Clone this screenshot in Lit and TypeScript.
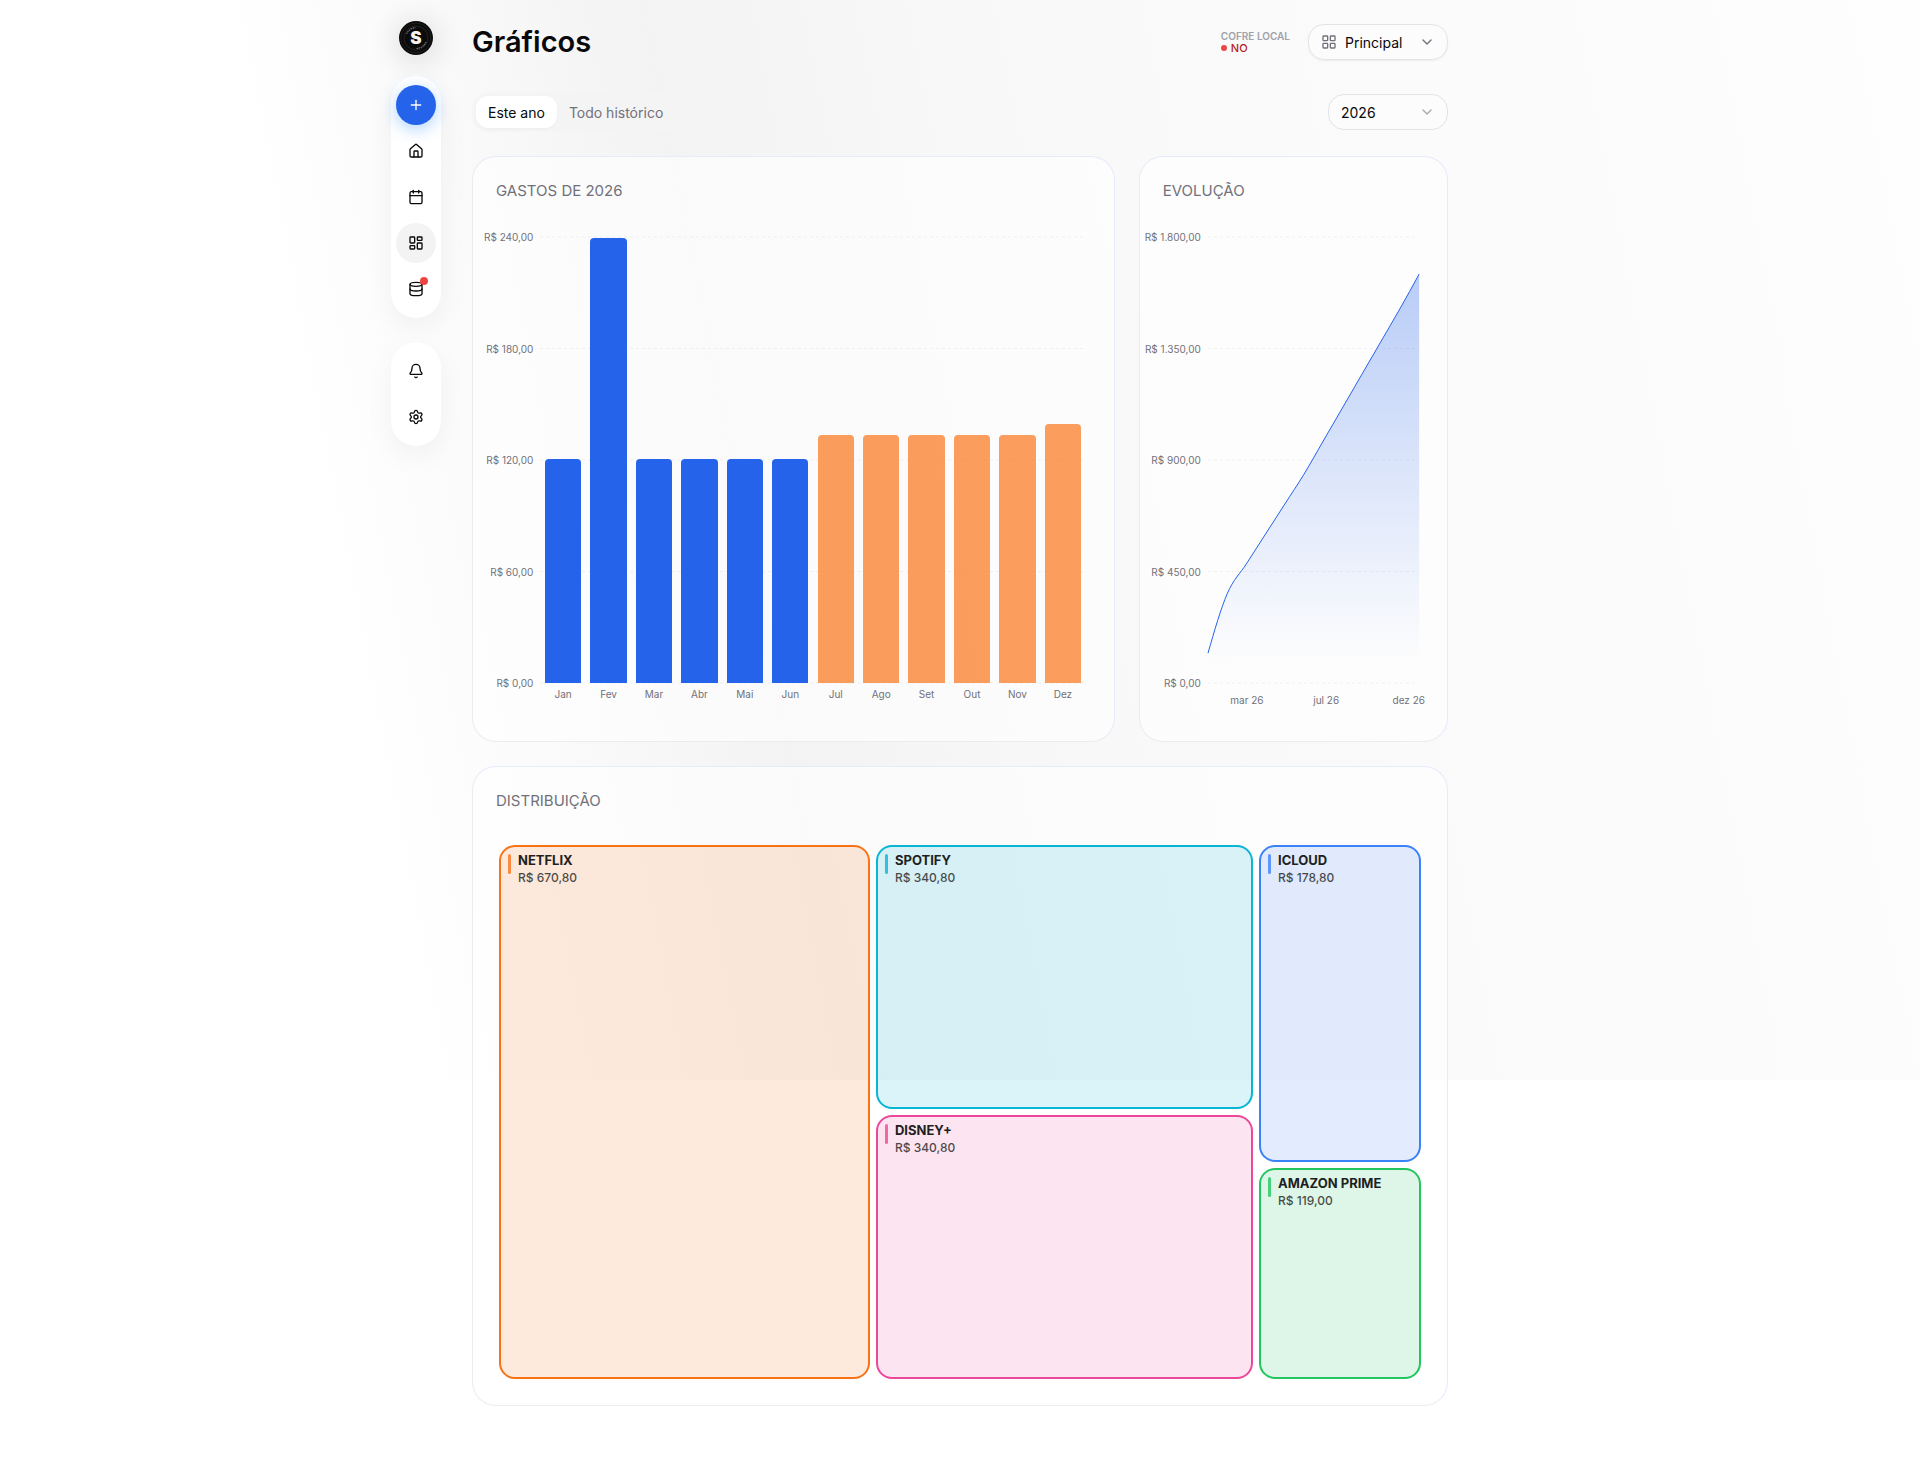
import { LitElement, html, css, svg } from "lit";
import { customElement, property, state } from "lit/decorators.js";
import { classMap } from "lit/directives/class-map.js";
import { styleMap } from "lit/directives/style-map.js";

const icons = {
  plus: svg`<path d="M5 12h14"/><path d="M12 5v14"/>`,
  home: svg`<path d="M15 21v-8a1 1 0 0 0-1-1h-4a1 1 0 0 0-1 1v8"/><path d="M3 10a2 2 0 0 1 .709-1.528l7-5.999a2 2 0 0 1 2.582 0l7 5.999A2 2 0 0 1 21 10v9a2 2 0 0 1-2 2H5a2 2 0 0 1-2-2z"/>`,
  calendar: svg`<path d="M8 2v4"/><path d="M16 2v4"/><rect width="18" height="18" x="3" y="4" rx="2"/><path d="M3 10h18"/>`,
  dashboard: svg`<rect width="7" height="9" x="3" y="3" rx="1"/><rect width="7" height="5" x="14" y="3" rx="1"/><rect width="7" height="9" x="14" y="12" rx="1"/><rect width="7" height="5" x="3" y="16" rx="1"/>`,
  database: svg`<ellipse cx="12" cy="5" rx="9" ry="3"/><path d="M3 5V19A9 3 0 0 0 21 19V5"/><path d="M3 12A9 3 0 0 0 21 12"/>`,
  bell: svg`<path d="M10.268 21a2 2 0 0 0 3.464 0"/><path d="M3.262 15.326A1 1 0 0 0 4 17h16a1 1 0 0 0 .74-1.673C19.41 13.956 18 12.499 18 8A6 6 0 0 0 6 8c0 4.499-1.411 5.956-2.738 7.326"/>`,
  settings: svg`<path d="M9.671 4.136a2.34 2.34 0 0 1 4.659 0 2.34 2.34 0 0 0 3.319 1.915 2.34 2.34 0 0 1 2.33 4.033 2.34 2.34 0 0 0 0 3.831 2.34 2.34 0 0 1-2.33 4.033 2.34 2.34 0 0 0-3.319 1.915 2.34 2.34 0 0 1-4.659 0 2.34 2.34 0 0 0-3.32-1.915 2.34 2.34 0 0 1-2.33-4.033 2.34 2.34 0 0 0 0-3.831A2.34 2.34 0 0 1 6.35 6.051a2.34 2.34 0 0 0 3.319-1.915"/><circle cx="12" cy="12" r="3"/>`,
  grid: svg`<rect width="7" height="7" x="3" y="3" rx="1"/><rect width="7" height="7" x="14" y="3" rx="1"/><rect width="7" height="7" x="14" y="14" rx="1"/><rect width="7" height="7" x="3" y="14" rx="1"/>`,
  chevron: svg`<path d="m6 9 6 6 6-6"/>`,
};

type IconName = keyof typeof icons;

const icon = (name: IconName, cls = "icon") => html`
  <svg class=${cls} viewBox="0 0 24 24" width="16" height="16" fill="none" stroke="currentColor"
    stroke-width="2" stroke-linecap="round" stroke-linejoin="round" aria-hidden="true">${icons[name]}</svg>`;

const money = (value: number) => {
  const [whole, cents] = value.toFixed(2).split(".");
  return `R$ ${whole.replace(/\B(?=(\d{3})+$)/g, ".")},${cents}`;
};

interface Month {
  label: string;
  value: number;
  forecast?: boolean;
}

const months: Month[] = [
  { label: "Jan", value: 120.6 },
  { label: "Fev", value: 239.6 },
  { label: "Mar", value: 120.6 },
  { label: "Abr", value: 120.6 },
  { label: "Mai", value: 120.6 },
  { label: "Jun", value: 120.6 },
  { label: "Jul", value: 133.6, forecast: true },
  { label: "Ago", value: 133.6, forecast: true },
  { label: "Set", value: 133.6, forecast: true },
  { label: "Out", value: 133.6, forecast: true },
  { label: "Nov", value: 133.6, forecast: true },
  { label: "Dez", value: 139.6, forecast: true },
];

const chartStyles = css`
  :host {
    display: grid;
    grid-template-columns: auto minmax(0, 1fr);
    column-gap: 7px;
    font-size: 10px;
    color: #71717a;
  }
  .axis {
    display: flex;
    flex-direction: column;
    justify-content: space-between;
    text-align: right;
    white-space: nowrap;
    line-height: 14px;
    margin: -7px 0;
  }
  .plot {
    position: relative;
    height: 446px;
  }
  .lines {
    position: absolute;
    inset: 0;
    width: 100%;
    height: 100%;
    overflow: visible;
  }
  .lines line {
    stroke: #000;
    stroke-opacity: 0.05;
    stroke-dasharray: 3 3;
  }
  .months {
    grid-column: 2;
    display: flex;
    line-height: 14px;
  }
`;

const gridLines = html`
  <svg class="lines" aria-hidden="true">
    ${[0, 25, 50, 75, 100].map((p) => svg`<line x1="0" x2="100%" y1="${p}%" y2="${p}%"></line>`)}
  </svg>`;

@customElement("bar-chart")
class BarChart extends LitElement {
  @property({ type: Number }) max = 240;

  static styles = [
    chartStyles,
    css`
      .bars {
        position: relative;
        display: flex;
        height: 100%;
        align-items: flex-end;
      }
      .slot {
        flex: 1;
        display: flex;
        align-items: flex-end;
        justify-content: center;
        height: 100%;
      }
      .bar {
        width: 80%;
        border-radius: 4px 4px 0 0;
        background: #2563eb;
      }
      .forecast {
        background: rgba(249, 133, 53, 0.8);
      }
      .months {
        padding-top: 4px;
      }
      .months span {
        flex: 1;
        text-align: center;
      }
    `,
  ];

  render() {
    return html`
      <div class="axis">${[4, 3, 2, 1, 0].map((n) => html`<span>${money((this.max * n) / 4)}</span>`)}</div>
      <div class="plot">
        ${gridLines}
        <div class="bars">
          ${months.map(
            (m) => html`<div class="slot">
              <div class=${classMap({ bar: true, forecast: !!m.forecast })}
                style=${styleMap({ height: `${(m.value / this.max) * 100}%` })}></div>
            </div>`,
          )}
        </div>
      </div>
      <div class="months">${months.map((m) => html`<span>${m.label}</span>`)}</div>
    `;
  }
}

@customElement("area-chart")
class AreaChart extends LitElement {
  @property({ type: Number }) max = 1800;

  static styles = [
    chartStyles,
    css`
      .months {
        display: grid;
        grid-template-columns: 76fr 78fr 57fr;
        padding-top: 10px;
        margin-right: -6px;
        text-align: center;
      }
      .months :last-child {
        text-align: right;
      }
      .line {
        fill: none;
        stroke: #2563eb;
        vector-effect: non-scaling-stroke;
      }
    `,
  ];

  /** Monotone cubic curve through the running total of the months. */
  private curve() {
    let total = 0;
    const pts = months.map((m, i) => {
      total += m.value;
      return { x: (i / (months.length - 1)) * 100, y: 100 - (total / this.max) * 100 };
    });
    const step = pts[1].x - pts[0].x;
    const slopes = pts.slice(1).map((p, i) => (p.y - pts[i].y) / step);
    const tangents = pts.map((_, i) => {
      if (i === 0 || i === pts.length - 1) return 0;
      const a = slopes[i - 1];
      const b = slopes[i];
      return (Math.sign(a) + Math.sign(b)) * Math.min(Math.abs(a), Math.abs(b), 0.25 * Math.abs(a + b));
    });
    tangents[0] = (3 * slopes[0] - tangents[1]) / 2;
    const last = pts.length - 1;
    tangents[last] = (3 * slopes[last - 1] - tangents[last - 1]) / 2;
    const h = step / 3;
    return pts
      .map((p, i) => {
        if (i === 0) return `M${p.x},${p.y}`;
        const q = pts[i - 1];
        return `C${q.x + h},${q.y + h * tangents[i - 1]} ${p.x - h},${p.y - h * tangents[i]} ${p.x},${p.y}`;
      })
      .join("");
  }

  render() {
    const d = this.curve();
    return html`
      <div class="axis">${[4, 3, 2, 1, 0].map((n) => html`<span>${money((this.max * n) / 4)}</span>`)}</div>
      <div class="plot">
        ${gridLines}
        <svg class="lines" viewBox="0 0 100 100" preserveAspectRatio="none" role="img" aria-label="Evolução">
          <defs>
            <linearGradient id="fade" x1="0" y1="0" x2="0" y2="1">
              <stop offset="5%" stop-color="#2563eb" stop-opacity="0.3"></stop>
              <stop offset="95%" stop-color="#2563eb" stop-opacity="0"></stop>
            </linearGradient>
          </defs>
          <path d="${d}L100,100L0,100Z" fill="url(#fade)"></path>
          <path class="line" d=${d}></path>
        </svg>
      </div>
      <div class="months"><span>mar 26</span><span>jul 26</span><span>dez 26</span></div>
    `;
  }
}

interface Tile {
  name: string;
  value: number;
  tone: string;
}

const columns: { rows: string; tiles: Tile[] }[] = [
  { rows: "1fr", tiles: [{ name: "NETFLIX", value: 670.8, tone: "orange" }] },
  {
    rows: "1fr 1fr",
    tiles: [
      { name: "SPOTIFY", value: 340.8, tone: "cyan" },
      { name: "DISNEY+", value: 340.8, tone: "pink" },
    ],
  },
  {
    rows: "3fr 2fr",
    tiles: [
      { name: "ICLOUD", value: 178.8, tone: "blue" },
      { name: "AMAZON PRIME", value: 119, tone: "green" },
    ],
  },
];

@customElement("tree-map")
class TreeMap extends LitElement {
  static styles = css`
    :host {
      display: grid;
      grid-template-columns: 371fr 377fr 162fr;
      gap: 6px;
      height: 534px;
    }
    .column {
      display: grid;
      gap: 6px;
    }
    .tile {
      --tone: 249 115 22;
      display: flex;
      align-items: flex-start;
      gap: 7px;
      padding: 5px 7px;
      border: 2px solid rgb(var(--tone));
      border-radius: 16px;
      background: rgb(var(--tone) / 0.15);
      color: #1f1f23;
      line-height: 17px;
    }
    .cyan { --tone: 6 182 212; }
    .pink { --tone: 236 72 153; }
    .blue { --tone: 59 130 246; }
    .green { --tone: 34 197 94; }
    .mark {
      width: 3px;
      height: 20px;
      margin-top: 2px;
      border-radius: 2px;
      background: rgb(var(--tone) / 0.8);
    }
    .name {
      font-size: 13px;
      font-weight: 700;
    }
    .value {
      font-size: 12px;
      font-weight: 500;
      opacity: 0.8;
    }
  `;

  render() {
    return columns.map(
      (c) => html`<div class="column" style=${styleMap({ gridTemplateRows: c.rows })}>
        ${c.tiles.map(
          (t) => html`<div class="tile ${t.tone}">
            <span class="mark"></span>
            <div>
              <div class="name">${t.name}</div>
              <div class="value">${money(t.value)}</div>
            </div>
          </div>`,
        )}
      </div>`,
    );
  }
}

@customElement("side-bar")
class SideBar extends LitElement {
  static styles = css`
    :host {
      display: flex;
      flex-direction: column;
      align-items: center;
      width: 50px;
    }
    .logo {
      width: 34px;
      height: 34px;
      margin-bottom: 21px;
      border-radius: 50%;
      box-shadow: 0 4px 30px 4px rgba(0, 0, 0, 0.12);
    }
    .logo svg {
      display: block;
    }
    .panel {
      display: flex;
      flex-direction: column;
      gap: 6px;
      padding: 9px 5px;
      margin-bottom: 24px;
      border-radius: 25px;
      background: #fff;
      box-shadow: 0 10px 30px rgba(0, 0, 0, 0.05);
    }
    .item {
      position: relative;
      display: flex;
      align-items: center;
      justify-content: center;
      width: 40px;
      height: 40px;
      padding: 0;
      border: 0;
      border-radius: 50%;
      background: none;
      color: #09090b;
    }
    .current {
      background: #f3f3f3;
    }
    .add {
      background: #2563eb;
      color: #fff;
      box-shadow: 0 4px 16px rgba(56, 148, 255, 0.4);
    }
    .dot {
      position: absolute;
      top: 8px;
      right: 8px;
      width: 8px;
      height: 8px;
      border-radius: 50%;
      background: #ef4444;
    }
  `;

  render() {
    return html`
      <a class="logo" href="#" aria-label="Início">
        <svg width="34" height="34" viewBox="0 0 34 34">
          <circle cx="17" cy="17" r="17" fill="#0b0b0b"/>
          <circle cx="17" cy="17" r="15" fill="none" stroke="#2a2a2a" stroke-width="0.6"/>
          <circle cx="17" cy="17" r="12" fill="none" stroke="#2a2a2a" stroke-width="0.8"/>
          <path d="M7.500 13a10.500 10.500 0 0 1 9-6.300" fill="none" stroke="#777" stroke-width="1.100" stroke-dasharray="1.500 0.600"/>
          <path d="M17.500 27.500a10.500 10.500 0 0 0 9.500-6.500" fill="none" stroke="#777" stroke-width="1.100" stroke-dasharray="1.500 0.600"/>
          <text x="17" y="23" text-anchor="middle" font-family="Inter, sans-serif" font-size="17" font-weight="900" fill="#f5f5f0">S</text>
        </svg>
      </a>
      <nav class="panel" aria-label="Principal">
        <button class="item add" aria-label="Adicionar">${icon("plus")}</button>
        <a class="item" href="#inicio" aria-label="Início">${icon("home")}</a>
        <a class="item" href="#calendario" aria-label="Calendário">${icon("calendar")}</a>
        <a class="item current" href="#graficos" aria-label="Gráficos" aria-current="page">${icon("dashboard")}</a>
        <a class="item" href="#dados" aria-label="Dados">${icon("database")}<span class="dot"></span></a>
      </nav>
      <div class="panel">
        <button class="item" aria-label="Notificações">${icon("bell")}</button>
        <button class="item" aria-label="Configurações">${icon("settings")}</button>
      </div>
    `;
  }
}

@customElement("app-root")
class AppRoot extends LitElement {
  @state() private range = "year";

  static styles = css`
    :host {
      display: block;
      position: relative;
      min-height: 100vh;
      box-sizing: border-box;
      padding-bottom: 72px;
      background: #fff;
      color: #09090b;
      font-family: Inter, "Liberation Sans", sans-serif;
      font-size: 14px;
    }
    .backdrop {
      position: absolute;
      inset: 0 0 auto 0;
      height: 1080px;
      background: linear-gradient(79deg, #fff 20%, #fbfbfb 28%, #f3f3f3 40%, #f8f8f8 54%, #fafafa 70%, #fefefe 100%);
    }
    .layout {
      position: relative;
      display: grid;
      grid-template-columns: minmax(82px, 1fr) minmax(0, 976px) minmax(32px, 1fr);
    }
    side-bar {
      justify-self: end;
      margin: 21px 31px 0 0;
    }
    main {
      padding-top: 24px;
    }
    header,
    .toolbar {
      display: flex;
      align-items: center;
      justify-content: space-between;
    }
    header {
      height: 36px;
      margin-bottom: 32px;
    }
    h1 {
      margin: 0;
      font-size: 29px;
      font-weight: 600;
      line-height: 36px;
    }
    .account {
      display: flex;
      align-items: center;
      gap: 18px;
    }
    .vault {
      font-size: 10px;
      font-weight: 600;
      line-height: 12px;
      color: #a1a1aa;
    }
    .status {
      display: flex;
      align-items: center;
      gap: 4px;
      font-size: 11px;
      font-weight: 500;
      color: #b91c1c;
    }
    .status::before {
      content: "";
      width: 6px;
      height: 6px;
      border-radius: 50%;
      background: #ef4444;
    }
    .picker {
      display: grid;
      align-items: center;
      box-sizing: border-box;
      width: 120px;
      height: 36px;
    }
    .picker > * {
      grid-area: 1 / 1;
    }
    .picker select {
      appearance: none;
      width: 100%;
      height: 36px;
      padding: 0 36px 0 12px;
      border: 1px solid #e4e4e7;
      border-radius: 16px;
      background: rgba(255, 255, 255, 0.4);
      color: inherit;
      font: inherit;
    }
    .picker .icon,
    .picker .chevron {
      pointer-events: none;
      color: #71717a;
    }
    .picker .icon {
      margin-left: 13px;
    }
    .picker .chevron {
      justify-self: end;
      margin-right: 13px;
    }
    .wide {
      width: 140px;
    }
    .wide select {
      padding-left: 36px;
      box-shadow: 0 1px 2px rgba(0, 0, 0, 0.06);
    }
    .year .chevron {
      opacity: 0.6;
    }
    .tabs {
      display: flex;
      padding: 4px;
      border-radius: 16px;
      background: rgba(243, 243, 243, 0.7);
    }
    .tab {
      height: 32px;
      padding: 0 12px;
      border: 0;
      border-radius: 12px;
      background: none;
      color: #71717a;
      font: inherit;
    }
    .active {
      background: #fff;
      color: #09090b;
      box-shadow: 0 1px 3px rgba(0, 0, 0, 0.04);
    }
    .cards {
      display: grid;
      grid-template-columns: repeat(12, minmax(0, 1fr));
      gap: 24px;
      margin-top: 24px;
    }
    .card {
      box-sizing: border-box;
      border: 1px solid #ececf0;
      border-top-color: #e6ebfb;
      border-right-color: #e6ebfb;
      border-radius: 24px;
      background: rgba(255, 255, 255, 0.6);
    }
    .spending {
      grid-column: span 8;
      padding: 22px 28px 40px 11px;
    }
    .evolution {
      grid-column: span 4;
      padding: 22px 28px 34px 5px;
    }
    .split {
      grid-column: span 12;
      padding: 22px 26px 26px;
    }
    h2 {
      margin: 0;
      font-size: 15px;
      font-weight: 400;
      line-height: 24px;
      color: #71717a;
    }
    .spending h2 { padding: 0 0 34px 12px; }
    .evolution h2 { padding: 0 0 34px 18px; }
    .split h2 { margin-left: -3px; padding-bottom: 32px; }
  `;

  private tab(id: string, label: string) {
    const on = this.range === id;
    return html`<button class=${classMap({ tab: true, active: on })} aria-pressed=${on}
      @click=${() => (this.range = id)}>${label}</button>`;
  }

  render() {
    return html`
      <div class="backdrop"></div>
      <div class="layout">
        <side-bar></side-bar>
        <main>
          <header>
            <h1>Gráficos</h1>
            <div class="account">
              <div class="vault">COFRE LOCAL<div class="status">NO</div></div>
              <label class="picker wide">
                <select aria-label="Carteira"><option>Principal</option></select>
                ${icon("grid")}${icon("chevron", "chevron")}
              </label>
            </div>
          </header>
          <div class="toolbar">
            <div class="tabs">${this.tab("year", "Este ano")}${this.tab("all", "Todo histórico")}</div>
            <label class="picker year">
              <select aria-label="Ano"><option>2026</option></select>
              ${icon("chevron", "chevron")}
            </label>
          </div>
          <div class="cards">
            <section class="card spending"><h2>GASTOS DE 2026</h2><bar-chart></bar-chart></section>
            <section class="card evolution"><h2>EVOLUÇÃO</h2><area-chart></area-chart></section>
            <section class="card split"><h2>DISTRIBUIÇÃO</h2><tree-map></tree-map></section>
          </div>
        </main>
      </div>
    `;
  }
}
